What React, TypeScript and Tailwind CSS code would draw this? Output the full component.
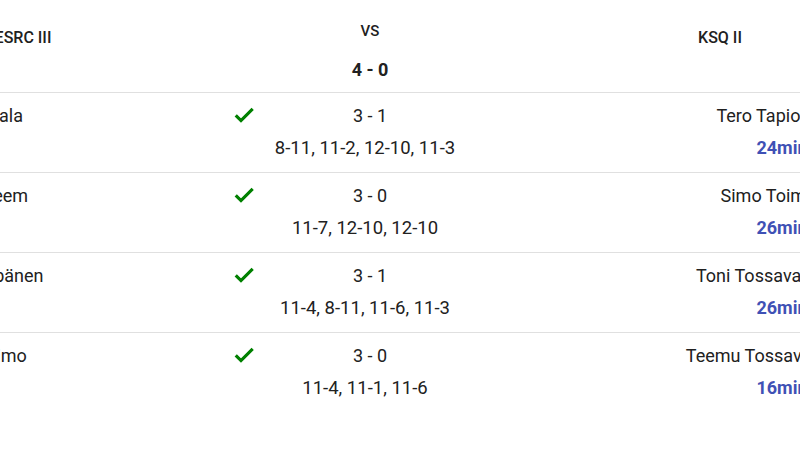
type Match = {
  home: string;
  away: string;
  score: string;
  sets: string;
  time: string;
};

const matches: Match[] = [
  { home: "Jarmo Rantala", away: "Tero Tapiola", score: "3 - 1", sets: "8-11, 11-2, 12-10, 11-3", time: "24min" },
  { home: "Khalid Nadeem", away: "Simo Toimi", score: "3 - 0", sets: "11-7, 12-10, 12-10", time: "26min" },
  { home: "Jarkko Leppänen", away: "Toni Tossavainen", score: "3 - 1", sets: "11-4, 8-11, 11-6, 11-3", time: "26min" },
  { home: "Kristian Salimo", away: "Teemu Tossavainen", score: "3 - 0", sets: "11-4, 11-1, 11-6", time: "16min" },
];

function Check() {
  return (
    <svg viewBox="0 0 24 24" className="w-6 h-6" fill="#008000" stroke="#008000" strokeWidth={1.1}>
      <path d="M9 16.17L4.83 12l-1.42 1.41L9 19 21 7l-1.41-1.41z" />
    </svg>
  );
}

function MatchRow({ m }: { m: Match }) {
  return (
    <div className="flex border-t border-[#e0e0e0] pt-[7px] pb-[8px]">
      <div className="w-[387px] shrink-0 pl-[61px] leading-[32px] whitespace-nowrap">{m.home}</div>
      <div className="w-6 shrink-0 pt-[3px]">
        <Check />
      </div>
      <div className="w-[218px] shrink-0 flex flex-col items-center leading-[32px] whitespace-nowrap">
        <div className="pl-[10px]">{m.score}</div>
        <div className="text-[18.5px]">{m.sets}</div>
      </div>
      <div className="w-[580px] shrink-0 flex flex-col items-center leading-[32px] whitespace-nowrap">
        <div className="pl-[3px]">{m.away}</div>
        <div className="pl-[36px] font-bold text-[#3f51b5]">{m.time}</div>
      </div>
    </div>
  );
}

export default function App() {
  return (
    <div className="w-[800px] h-[450px] overflow-hidden bg-white text-[#212121] font-['Roboto',sans-serif]">
      <div className="w-[1209px] -ml-[155px] text-[18px]">
        {/* team header */}
        <div className="grid grid-cols-[350px_350px_350px] h-[92px]">
          <div className="text-center pt-[27px] pl-[6px] text-[16px] font-medium leading-[22px]">ESRC III</div>
          <div className="flex flex-col items-center pt-[20px]">
            <div className="text-[15px] font-medium leading-[22px]">VS</div>
            <div className="mt-[16px] text-[18px] font-bold leading-[24px]">4 - 0</div>
          </div>
          <div className="text-center pt-[27px] text-[16px] font-medium leading-[22px]">KSQ II</div>
        </div>
        {matches.map((m) => (
          <MatchRow key={m.home} m={m} />
        ))}
      </div>
    </div>
  );
}
